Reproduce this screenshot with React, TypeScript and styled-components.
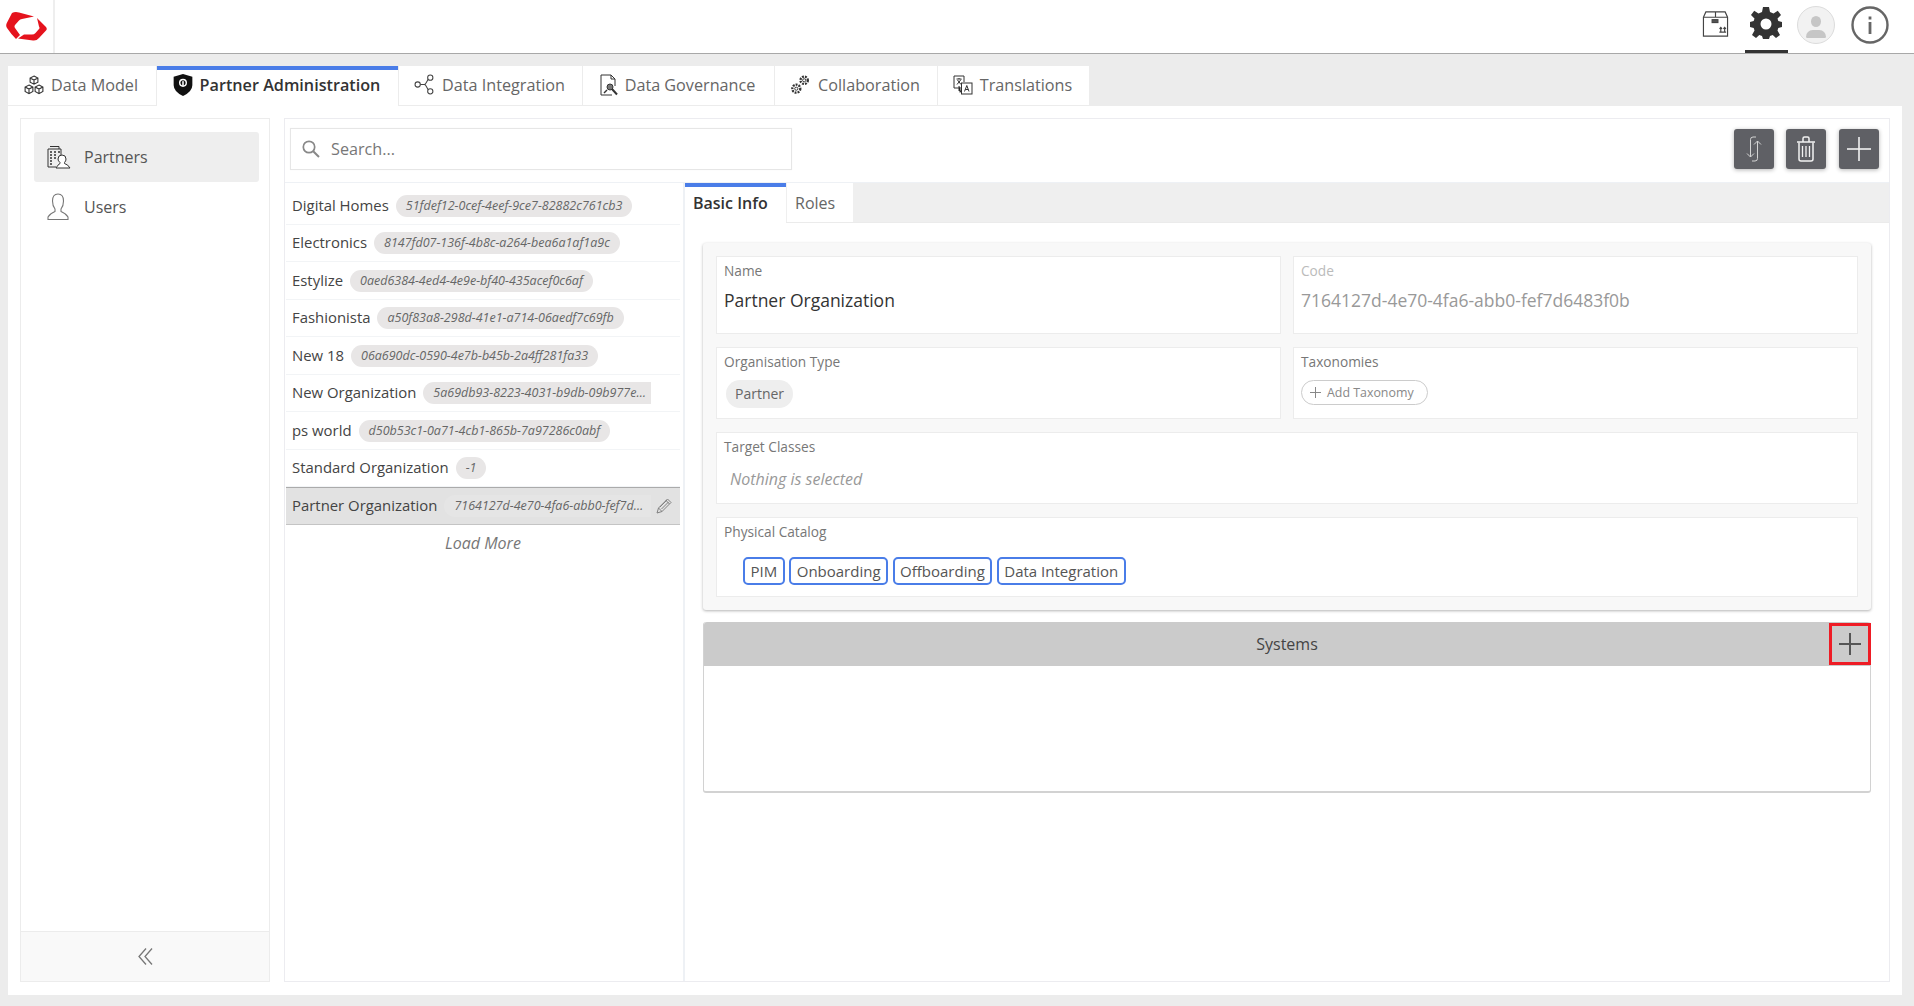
import React from "react";
import styled, { createGlobalStyle } from "styled-components";

const partners = [
    { name: "Digital Homes", code: "51fdef12-0cef-4eef-9ce7-82882c761cb3" },
    { name: "Electronics", code: "8147fd07-136f-4b8c-a264-bea6a1af1a9c" },
    { name: "Estylize", code: "0aed6384-4ed4-4e9e-bf40-435acef0c6af" },
    { name: "Fashionista", code: "a50f83a8-298d-41e1-a714-06aedf7c69fb" },
    { name: "New 18", code: "06a690dc-0590-4e7b-b45b-2a4ff281fa33" },
    { name: "New Organization", code: "5a69db93-8223-4031-b9db-09b977ef7c21" },
    { name: "ps world", code: "d50b53c1-0a71-4cb1-865b-7a97286c0abf" },
    { name: "Standard Organization", code: "-1" },
];

const catalogs = ["PIM", "Onboarding", "Offboarding", "Data Integration"];

const Logo = () => (
    <svg width="41" height="29" viewBox="0 0 41 29">
        <path fill="#e5131d" d="M6 1 Q9 -.5 13 .5 L28 4.500 L16 7 Q14 7.400 13 8.500 L9 13 Q8 14.500 9 16 L14 23 L10 27 Q5 22 1 16 Q-.5 14 .8 11 Z" />
        <path fill="#e5131d" d="M31 6 L40 15 Q41.500 17 40 18.500 L33 26 Q30.500 29 27 28.500 L12 26.500 L18 22.500 L26 22.500 Q28 22.500 29.500 21 L33 17 Q34 16 33 14.500 Z" />
    </svg>
);

const BoxIcon = () => (
    <svg width="28" height="28" viewBox="0 0 28 28" fill="none" stroke="#444" strokeWidth="1.200">
        <path d="M1.500 7 L4 1.500 H24 L26.500 7 V26.500 H1.500 Z M1.500 7 H26.500 M14 1.500 V7" />
        <rect x="10.500" y="9.500" width="6" height="3" fill="#555" />
        <path d="M18 22.500 H25 M19.500 22 V17.500 M23.500 22 V17.500 M18.200 19 L19.500 17.500 L20.800 19 M22.200 19 L23.500 17.500 L24.800 19" />
    </svg>
);

const GearIcon = () => (
    <svg width="32" height="32" viewBox="0 0 32 32">
        <path
            fill="#333"
            fillRule="evenodd"
            d="M13 0 H19 L20 5 L23.500 6.500 L27.800 3.700 L31 8 L27.500 11.500 L28.300 14 L32 15 V20 L28.300 21 L27.500 23.500 L30 28 L26 31 L22.700 28 L20 29 L19 32 H13 L12 29 L9.300 28 L6 31 L2 28 L4.500 23.500 L3.700 21 L0 20 V15 L3.700 14 L4.500 11.500 L1 8 L4.200 3.700 L8.500 6.500 L12 5 Z M16 11.500 A5.500 5.500 0 1 0 16 22.500 A5.500 5.500 0 1 0 16 11.500 Z"
        />
    </svg>
);

const InfoIcon = () => (
    <svg width="38" height="38" viewBox="0 0 38 38" fill="none">
        <circle cx="19" cy="19" r="17.500" stroke="#666" strokeWidth="2.400" />
        <rect x="17.600" y="16" width="2.800" height="12" fill="#666" />
        <rect x="17.600" y="10.500" width="2.800" height="3" fill="#666" />
    </svg>
);

const CubesIcon = () => (
    <svg width="20" height="20" viewBox="0 0 18 18" fill="none" stroke="#333" strokeWidth="1">
        <path d="M9 1 L12.500 2.800 V6.500 L9 8.300 L5.500 6.500 V2.800 Z M5.500 2.800 L9 4.600 L12.500 2.800 M9 4.600 V8.300" />
        <path d="M4.500 9 L8 10.800 V14.800 L4.500 16.800 L1 14.800 V10.800 Z M1 10.800 L4.500 12.700 L8 10.800 M4.500 12.700 V16.800" />
        <path d="M13.500 9 L17 10.800 V14.800 L13.500 16.800 L10 14.800 V10.800 Z M10 10.800 L13.500 12.700 L17 10.800 M13.500 12.700 V16.800" />
    </svg>
);

const ShieldIcon = () => (
    <svg width="20" height="22" viewBox="0 0 18 20">
        <path fill="#111" d="M9 0 L17.500 2.500 V10 Q17.500 16 9 20 Q.5 16 .5 10 V2.500 Z" />
        <circle cx="9" cy="8" r="3" fill="none" stroke="#fff" strokeWidth="1.300" />
        <rect x="8.300" y="6.500" width="1.400" height="5" fill="#fff" />
    </svg>
);

const NodesIcon = () => (
    <svg width="21" height="21" viewBox="0 0 20 20" fill="none" stroke="#444" strokeWidth="1">
        <circle cx="3.500" cy="10" r="2.500" />
        <circle cx="15.500" cy="3.500" r="2.500" />
        <circle cx="15.500" cy="16.500" r="2.500" />
        <path d="M6 10 H9.500 Q11 10 11.500 8.500 L13.500 5 M9.500 10 Q11 10 11.500 11.500 L13.500 15" />
    </svg>
);

const DocSearchIcon = () => (
    <svg width="18" height="22" viewBox="0 0 18 22" fill="none" stroke="#333" strokeWidth="1">
        <path d="M12 21 H1 V1 H11 L15 5 V12 M11 1 V5 H15" />
        <circle cx="10" cy="13" r="3" fill="#777" />
        <path d="M12 15 L17 20.500" strokeWidth="2" />
        <path d="M7 16 L4 19" strokeWidth="1.500" />
    </svg>
);

const GearsIcon = () => (
    <svg width="21" height="21" viewBox="0 0 20 20" fill="none" stroke="#333">
        <circle cx="13.500" cy="6" r="3.500" strokeWidth="2.200" strokeDasharray="1.800 1" />
        <circle cx="13.500" cy="6" r="1.500" strokeWidth=".9" />
        <circle cx="6" cy="14" r="3.800" strokeWidth="2.200" strokeDasharray="1.800 1" />
        <circle cx="6" cy="14" r="1.500" strokeWidth=".9" />
    </svg>
);

const TranslateIcon = () => (
    <svg width="20" height="20" viewBox="0 0 20 20" fill="none" stroke="#333" strokeWidth="1">
        <path d="M10 13 H1 V1 H11 V7" />
        <path d="M3.500 4 H8.500 M6 3 V4 M4 9.500 L8 4.500 M4.500 5 L8 9.500" />
        <rect x="8.500" y="8" width="10.500" height="11" fill="#fff" />
        <path d="M11.500 16.500 L13.800 10.500 L16 16.500 M12.300 14.500 H15.300" />
        <path d="M6 11 V16 H8 M7 14.500 L8.500 16 L7 17.500" fill="#111" />
    </svg>
);

const PartnersIcon = () => (
    <svg width="24" height="24" viewBox="0 0 24 24" fill="none" stroke="#333" strokeWidth="1">
        <path d="M3 1.500 H12 V4 M1 4 H14 V12 M1 4 V22 H9" />
        <path d="M3 7 H5 M7 7 H9 M11 7 H13 M3 10 H5 M7 10 H9 M3 13 H5 M7 13 H9 M3 16 H5 M3 19 H5" strokeWidth="1.600" />
        <path d="M15 10 Q19 10 19 14 Q19 16 17.500 17.500 V18.500 Q21 19.500 23 23 H9 Q11 19.500 13 18.500 V17.500 Q11 16 11 14 Q11 10 15 10 Z" fill="#fff" />
    </svg>
);

const UserIcon = () => (
    <svg width="22" height="28" viewBox="0 0 22 28" fill="none" stroke="#777" strokeWidth="1.100">
        <path d="M11 1 Q16.500 1 16.500 8 Q16.500 13 14 16 V18.500 Q19 20.500 21 24 V26.500 H1 V24 Q3 20.500 8 18.500 V16 Q5.500 13 5.500 8 Q5.500 1 11 1 Z" />
    </svg>
);

const SearchIcon = () => (
    <svg width="18" height="18" viewBox="0 0 18 18" fill="none" stroke="#888" strokeWidth="1.700">
        <circle cx="7" cy="7" r="5.700" />
        <path d="M11.200 11.200 L17 17" strokeWidth="2" />
    </svg>
);

const SyncIcon = () => (
    <svg width="20" height="26" viewBox="0 0 20 26" fill="none" stroke="#d4d4d4" strokeWidth="1">
        <path d="M12 1 H9 Q6.500 1 6.500 3.500 V21 M3 17.500 L6.500 21 L10 17.500" />
        <path d="M8 25 H11 Q13.500 25 13.500 22.500 V5 M10 8.500 L13.500 5 L17 8.500" />
    </svg>
);

const TrashIcon = () => (
    <svg width="20" height="26" viewBox="0 0 20 26" fill="none" stroke="#f2f2f2" strokeWidth="1.500">
        <path d="M1 6 H19 M7 5.500 V2.500 Q7 1 8.500 1 H11.500 Q13 1 13 2.500 V5.500" />
        <path d="M3 6.500 V23 Q3 25 5 25 H15 Q17 25 17 23 V6.500" />
        <path d="M6.500 10 V21 M10 10 V21 M13.500 10 V21" strokeWidth="1.300" />
    </svg>
);

const PlusIcon = ({ size, color, weight }: { size: number; color: string; weight: number }) => (
    <svg width={size} height={size} viewBox={`0 0 ${size} ${size}`}>
        <rect x="0" y={(size - weight) / 2} width={size} height={weight} fill={color} />
        <rect x={(size - weight) / 2} y="0" width={weight} height={size} fill={color} />
    </svg>
);

const PencilIcon = () => (
    <svg width="16" height="16" viewBox="0 0 16 16" fill="none" stroke="#808080" strokeWidth="1">
        <path d="M1 15 L2.500 10 L11.500 1 L15 4.500 L6 13.500 Z M2.500 10 L6 13.500 M10 2.500 L13.500 6 M4 9 L11 2 M5.500 11 L12.500 4" />
    </svg>
);

const ChevronsIcon = () => (
    <svg width="15" height="17" viewBox="0 0 15 17" fill="none" stroke="#777" strokeWidth="1.300">
        <path d="M8 .5 L1 8.500 L8 16.500 M14 .5 L7 8.500 L14 16.500" />
    </svg>
);

const App = () => {
    return (
        <Page>
            <GlobalStyle />

            <TopBar>
                <LogoCell>
                    <Logo />
                </LogoCell>

                <TopActions>
                    <BoxAction>
                        <BoxIcon />
                    </BoxAction>
                    <GearAction>
                        <GearIcon />
                    </GearAction>
                    <Avatar>
                        <AvatarHead />
                        <AvatarBody />
                    </Avatar>
                    <InfoIcon />
                </TopActions>
            </TopBar>

            <MainTabs>
                <MainTab $width={148}>
                    <CubesIcon />
                    Data Model
                </MainTab>
                <MainTab $width={241} $active>
                    <ShieldIcon />
                    Partner Administration
                </MainTab>
                <MainTab $width={183}>
                    <NodesIcon />
                    Data Integration
                </MainTab>
                <MainTab $width={191}>
                    <DocSearchIcon />
                    Data Governance
                </MainTab>
                <MainTab $width={162}>
                    <GearsIcon />
                    Collaboration
                </MainTab>
                <MainTab $width={151}>
                    <TranslateIcon />
                    Translations
                </MainTab>
            </MainTabs>

            <Content>
                <Sidebar>
                    <SideMenu>
                        <SideItem $active>
                            <SideIcon>
                                <PartnersIcon />
                            </SideIcon>
                            Partners
                        </SideItem>
                        <SideItem>
                            <SideIcon>
                                <UserIcon />
                            </SideIcon>
                            Users
                        </SideItem>
                    </SideMenu>

                    <SideFooter>
                        <ChevronsIcon />
                    </SideFooter>
                </Sidebar>

                <Panel>
                    <Toolbar>
                        <SearchBox>
                            <SearchIcon />
                            <SearchText>Search...</SearchText>
                        </SearchBox>

                        <ToolButtons>
                            <ToolButton>
                                <SyncIcon />
                            </ToolButton>
                            <ToolButton>
                                <TrashIcon />
                            </ToolButton>
                            <ToolButton>
                                <PlusIcon size={24} color="#f0f0f0" weight={1.6} />
                            </ToolButton>
                        </ToolButtons>
                    </Toolbar>

                    <Split>
                        <ListColumn>
                            {partners.map((p) => (
                                <ListRow key={p.name}>
                                    <RowName>{p.name}</RowName>
                                    <CodePill $clipped={p.name === "New Organization"}>{p.code}</CodePill>
                                </ListRow>
                            ))}

                            <ListRow $selected>
                                <RowName>Partner Organization</RowName>
                                <CodePill $clipped $selected>
                                    7164127d-4e70-4fa6-abb0-fef7d6483f0b
                                </CodePill>
                                <RowEdit>
                                    <PencilIcon />
                                </RowEdit>
                            </ListRow>

                            <LoadMore>Load More</LoadMore>
                        </ListColumn>

                        <Detail>
                            <DetailTabs>
                                <DetailTab $active>Basic Info</DetailTab>
                                <DetailTab>Roles</DetailTab>
                            </DetailTabs>

                            <DetailBody>
                                <Card>
                                    <Field $height={78}>
                                        <Label>Name</Label>
                                        <Value>Partner Organization</Value>
                                    </Field>
                                    <Field $height={78}>
                                        <Label $muted>Code</Label>
                                        <Value $muted>7164127d-4e70-4fa6-abb0-fef7d6483f0b</Value>
                                    </Field>
                                    <Field $height={72}>
                                        <Label>Organisation Type</Label>
                                        <TypeChip>Partner</TypeChip>
                                    </Field>
                                    <Field $height={72}>
                                        <Label>Taxonomies</Label>
                                        <AddChip>
                                            <PlusIcon size={11} color="#888" weight={1} />
                                            Add Taxonomy
                                        </AddChip>
                                    </Field>
                                    <Field $height={72} $wide>
                                        <Label>Target Classes</Label>
                                        <Placeholder>Nothing is selected</Placeholder>
                                    </Field>
                                    <Field $height={80} $wide>
                                        <Label>Physical Catalog</Label>
                                        <CatalogList>
                                            {catalogs.map((c) => (
                                                <CatalogChip key={c}>{c}</CatalogChip>
                                            ))}
                                        </CatalogList>
                                    </Field>
                                </Card>

                                <Systems>
                                    <SystemsHeader>
                                        Systems
                                        <SystemsAdd>
                                            <PlusIcon size={22} color="#555" weight={2} />
                                        </SystemsAdd>
                                    </SystemsHeader>
                                </Systems>
                            </DetailBody>
                        </Detail>
                    </Split>
                </Panel>
            </Content>
        </Page>
    );
};

export default App;

const GlobalStyle = createGlobalStyle`
    html, body {
        margin: 0;
        padding: 0;
        background: #ececec;
        font-family: "Open Sans", "Liberation Sans", sans-serif;
    }

    * {
        box-sizing: border-box;
    }
`;

const Page = styled.div`
    height: 1006px;
    overflow: hidden;

    display: flex;
    flex-direction: column;
`;

const TopBar = styled.header`
    flex: none;
    height: 54px;

    display: flex;
    justify-content: space-between;

    background: #fff;
    border-bottom: 1px solid #a8a8a8;
`;

const LogoCell = styled.div`
    width: 55px;

    display: flex;
    align-items: center;

    padding: 0 0 0 6px;

    border-right: 2px solid #eeeeee;
`;

const TopActions = styled.div`
    display: flex;
    align-items: flex-start;

    padding: 6px 25px 0 0;
`;

const BoxAction = styled.div`
    width: 27px;
    height: 47px;

    display: flex;
    justify-content: center;

    margin-right: 16px;
    padding-top: 4px;
`;

const GearAction = styled.div`
    width: 43px;
    height: 47px;

    display: flex;
    justify-content: center;

    margin-right: 9px;
    padding: 1px 2px 0 0;

    border-bottom: 3px solid #333;
`;

const Avatar = styled.div`
    position: relative;
    overflow: hidden;

    width: 38px;
    height: 38px;

    margin-right: 16px;

    background: #f2f2f2;
    border: 1px solid #dcdcdc;
    border-radius: 50%;
`;

const AvatarHead = styled.div`
    position: absolute;
    top: 9px;
    left: 13px;

    width: 10px;
    height: 11px;

    background: #c6c6c6;
    border-radius: 50%;
`;

const AvatarBody = styled.div`
    position: absolute;
    top: 23px;
    left: 8px;

    width: 20px;
    height: 8px;

    background: #c6c6c6;
    border-radius: 10px 10px 2px 2px;
`;

const MainTabs = styled.nav`
    flex: none;
    height: 52px;

    display: flex;
    gap: 1px;

    padding: 12px 0 0 8px;
`;

const MainTab = styled.div<{ $width: number; $active?: boolean }>`
    width: ${(p) => p.$width}px;
    height: ${(p) => (p.$active ? "40px" : "39px")};

    display: flex;
    align-items: center;
    justify-content: center;
    gap: 7px;

    padding: 0 2px 6px 0;

    font-size: 16.2px;
    font-weight: ${(p) => (p.$active ? 600 : 400)};
    color: ${(p) => (p.$active ? "#333" : "#666")};

    background: #fff;
    border-top: 4px solid ${(p) => (p.$active ? "#4a7de8" : "#fff")};
`;

const Content = styled.main`
    flex: none;
    height: 889px;

    display: flex;
    gap: 14px;

    margin: 0 12px 0 8px;
    padding: 12px 12px 13px 12px;

    background: #fff;
`;

const Sidebar = styled.aside`
    flex: none;
    width: 250px;

    display: flex;
    flex-direction: column;
    justify-content: space-between;

    border: 1px solid #ececec;
`;

const SideMenu = styled.div`
    padding: 13px 10px 0 13px;
`;

const SideItem = styled.div<{ $active?: boolean }>`
    height: 50px;

    display: flex;
    align-items: center;

    padding-left: 13px;

    font-size: 16px;
    color: #555;

    background: ${(p) => (p.$active ? "#eeeeee" : "transparent")};
    border-radius: 3px;
`;

const SideIcon = styled.span`
    width: 37px;

    display: flex;
`;

const SideFooter = styled.div`
    height: 50px;

    display: flex;
    align-items: center;
    justify-content: center;

    background: #f9f9f9;
    border-top: 1px solid #ececec;
`;

const Panel = styled.section`
    flex: 1;
    min-width: 0;

    display: flex;
    flex-direction: column;

    border: 1px solid #ececf0;
`;

const Toolbar = styled.div`
    flex: none;
    height: 64px;

    display: flex;
    justify-content: space-between;
    align-items: flex-start;

    padding: 9px 10px 0 5px;

    border-bottom: 1px solid #eef1f5;
`;

const SearchBox = styled.div`
    width: 502px;
    height: 42px;

    display: flex;
    align-items: center;
    gap: 11px;

    padding-left: 11px;

    border: 1px solid #e6e6e6;
    box-shadow: 0 0 1px rgba(0, 0, 0, 0.06);
`;

const SearchText = styled.span`
    font-size: 16.2px;
    color: #777;
`;

const ToolButtons = styled.div`
    display: flex;
    gap: 12px;

    padding-top: 1px;
`;

const ToolButton = styled.div`
    width: 40px;
    height: 40px;

    display: flex;
    align-items: center;
    justify-content: center;

    background: #5f6065;
    border-radius: 3px;
    box-shadow: 0 1px 4px rgba(0, 0, 0, 0.3);

    &:last-child {
        margin-left: 1px;
    }
`;

const Split = styled.div`
    flex: 1;
    min-height: 0;

    display: flex;
`;

const ListColumn = styled.div`
    flex: none;
    width: 400px;

    padding: 4px 3px 0 1px;

    border-right: 2px solid #eef1f5;
`;

const ListRow = styled.div<{ $selected?: boolean }>`
    position: relative;

    height: 37.5px;

    display: flex;
    align-items: center;

    padding: 0 29px 0 6px;

    background: ${(p) => (p.$selected ? "#e2e2e2" : "#fff")};
    border-bottom: 1px solid ${(p) => (p.$selected ? "#c4c4c4" : "#f2f4f6")};
    border-top: ${(p) => (p.$selected ? "1px solid #ababab" : "0")};
`;

const RowName = styled.span`
    flex: none;

    margin: 0 7px 1px 0;

    font-size: 14.9px;
    color: #444;
`;

const CodePill = styled.span<{ $clipped?: boolean; $selected?: boolean }>`
    min-width: 0;
    height: 22px;

    margin-top: 1px;
    padding: 0 ${(p) => (p.$clipped ? "2px" : "10px")} 0 10px;

    overflow: hidden;
    white-space: nowrap;
    text-overflow: ellipsis;

    font-size: 12.5px;
    font-style: italic;
    line-height: 22px;
    color: #666;

    background: ${(p) => (p.$selected ? "#e5e5e5" : "#e8e6e6")};
    border-radius: ${(p) => (p.$clipped ? "11px 0 0 11px" : "11px")};
`;

const RowEdit = styled.span`
    position: absolute;
    top: 10px;
    right: 8px;

    display: flex;
`;

const LoadMore = styled.div`
    padding-top: 8px;

    font-size: 16px;
    font-style: italic;
    line-height: 20px;
    text-align: center;
    color: #777;
`;

const Detail = styled.div`
    flex: 1;
    min-width: 0;
`;

const DetailTabs = styled.div`
    height: 40px;

    display: flex;

    background: #efefef;
    border-bottom: 1px solid #ebebeb;
`;

const DetailTab = styled.div<{ $active?: boolean }>`
    width: ${(p) => (p.$active ? "101px" : "66px")};
    height: ${(p) => (p.$active ? "40px" : "39px")};

    display: flex;
    align-items: center;

    margin-right: ${(p) => (p.$active ? "1px" : "0")};
    padding: 0 0 4px 8px;

    font-size: 16px;
    font-weight: ${(p) => (p.$active ? 600 : 400)};
    color: ${(p) => (p.$active ? "#333" : "#666")};

    background: #fff;
    border-top: 4px solid ${(p) => (p.$active ? "#4a7de8" : "#fff")};
`;

const DetailBody = styled.div`
    padding: 20px 18px 0 18px;
`;

const Card = styled.div`
    display: grid;
    grid-template-columns: 1fr 1fr;
    gap: 13px 12px;

    padding: 13px;

    background: #f8f8f8;
    border-radius: 3px;
    box-shadow: 0 1px 3px rgba(0, 0, 0, 0.3);
`;

const Field = styled.div<{ $height: number; $wide?: boolean }>`
    height: ${(p) => p.$height}px;
    grid-column: ${(p) => (p.$wide ? "1 / -1" : "auto")};

    padding: 4px 7px 0 7px;

    background: #fff;
    border: 1px solid #ececec;
`;

const Label = styled.div<{ $muted?: boolean }>`
    font-size: 13.7px;
    line-height: 20px;
    color: ${(p) => (p.$muted ? "#bbb" : "#777")};
`;

const Value = styled.div<{ $muted?: boolean }>`
    margin-top: 7px;

    font-size: 17.5px;
    line-height: 24px;
    color: ${(p) => (p.$muted ? "#999" : "#333")};
`;

const TypeChip = styled.span`
    display: inline-block;

    height: 28px;

    margin: 8px 0 0 2px;
    padding: 0 9px;

    font-size: 14px;
    line-height: 28px;
    color: #666;

    background: #eeeeee;
    border-radius: 14px;
`;

const AddChip = styled.span`
    width: 127px;
    height: 25px;

    display: flex;
    align-items: center;
    gap: 6px;

    margin-top: 8px;
    padding-left: 8px;

    font-size: 12.4px;
    color: #888;

    border: 1px solid #cccccc;
    border-radius: 13px;
`;

const Placeholder = styled.div`
    margin-top: 10px;
    padding-left: 6px;

    font-size: 16px;
    font-style: italic;
    line-height: 24px;
    color: #999;
`;

const CatalogList = styled.div`
    display: flex;
    gap: 4.5px;

    margin-top: 15px;
    padding-left: 19px;
`;

const CatalogChip = styled.span`
    height: 28px;

    padding: 0 5.5px;

    font-size: 15px;
    line-height: 24px;
    color: #555;

    border: 2px solid #4a7de8;
    border-radius: 5px;
`;

const Systems = styled.div`
    height: 171px;

    margin-top: 12px;

    background: #fff;
    border: 1px solid #d2d2d2;
    border-top: 0;
    border-bottom: 2px solid #d2d2d2;
    border-radius: 3px;
`;

const SystemsHeader = styled.div`
    position: relative;

    height: 44px;

    display: flex;
    align-items: center;
    justify-content: center;

    font-size: 16px;
    color: #444;

    background: #cbcbcb;
    border-radius: 3px 3px 0 0;
`;

const SystemsAdd = styled.div`
    position: absolute;
    top: 1px;
    right: -1px;

    width: 42px;
    height: 42px;

    display: flex;
    align-items: center;
    justify-content: center;

    border: 3px solid #ee1c25;
`;
